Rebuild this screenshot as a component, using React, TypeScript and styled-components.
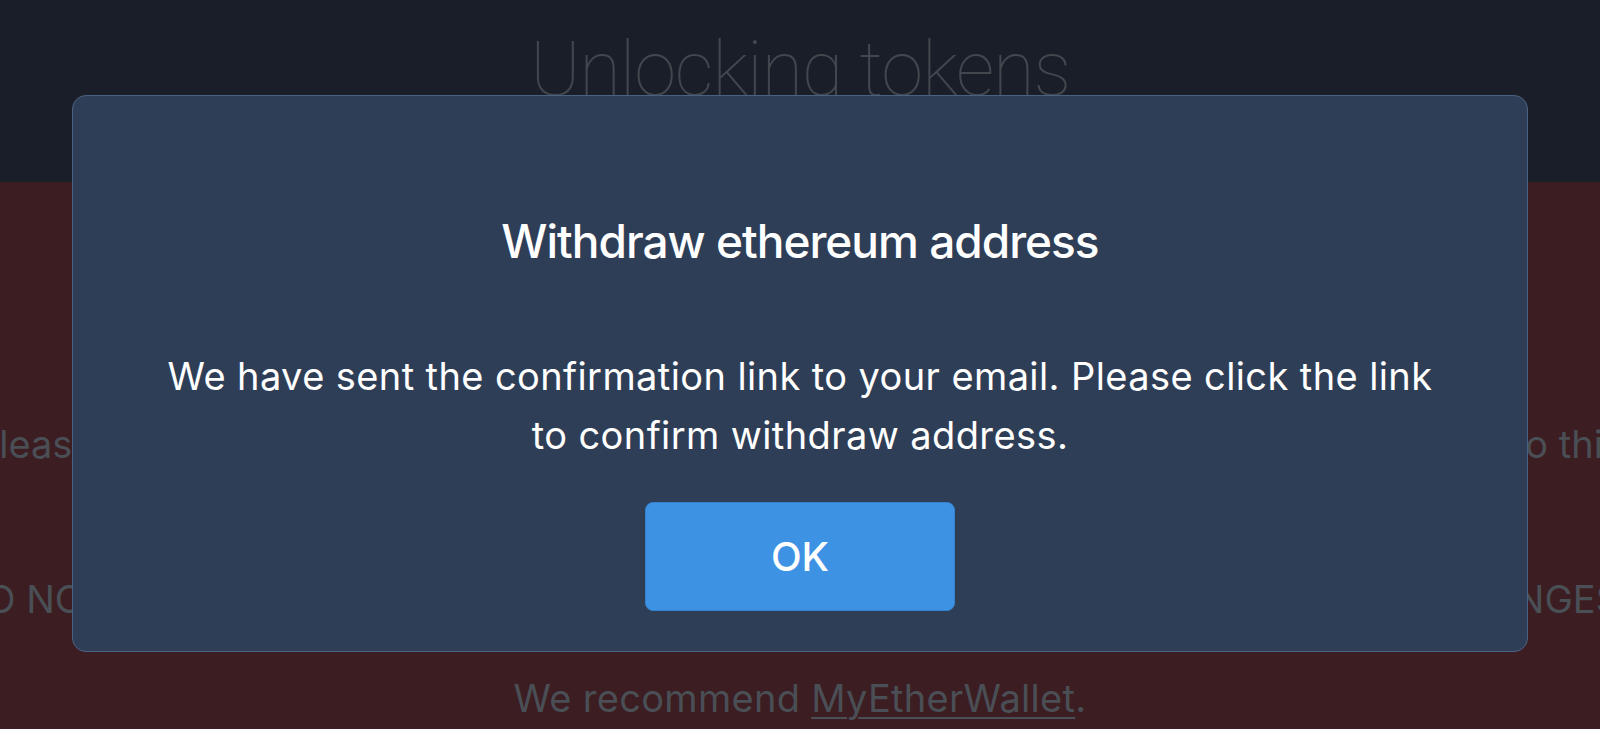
import styled, { createGlobalStyle } from "styled-components";

const GlobalStyle = createGlobalStyle`
  html, body {
    margin: 0;
    padding: 0;
    height: 100%;
    overflow: hidden;
    background: #3c1d22;
  }

  body {
    font-family: Inter, "Noto Sans", "Liberation Sans", sans-serif;
  }
`;

const Page = styled.div`
  width: 100%;
  height: 729px;
  overflow: hidden;
  position: relative;
`;

const Header = styled.header`
  height: 182px;
  background: #191e28;
  display: flex;
  justify-content: center;
  padding-top: 24px;
  box-sizing: border-box;
`;

const PageTitle = styled.h1`
  margin: 0;
  font-family: Roboto, "Liberation Sans", sans-serif;
  font-weight: 100;
  font-size: 76px;
  line-height: normal;
  letter-spacing: -1.2px;
  color: #42464d;
`;

const Content = styled.section`
  display: flex;
  flex-direction: column;
  align-items: center;
  padding-top: 234px;
  color: #4a4e55;
  font-size: 38px;
  line-height: 57px;
`;

// a line wider than the window; its middle sits behind the dialog
const WideLine = styled.p<{ $width: number; $shift: number; $gap: number }>`
  margin: 0 0 ${({ $gap }) => $gap}px ${({ $shift }) => $shift}px;
  flex: none;
  width: ${({ $width }) => $width}px;
  display: flex;
  justify-content: space-between;
  white-space: nowrap;
`;

const Recommend = styled.p`
  margin: 0;
  white-space: nowrap;
  letter-spacing: 0.3px;

  a {
    color: inherit;
    text-decoration: underline;
    text-underline-offset: 5px;
    text-decoration-thickness: 2px;
  }
`;

const Overlay = styled.div`
  position: absolute;
  inset: 0;
  display: flex;
  justify-content: center;
  align-items: flex-start;
  padding-top: 95px;
  box-sizing: border-box;
`;

const Modal = styled.div`
  width: 1456px;
  height: 557px;
  box-sizing: border-box;
  background: #2f3e57;
  border: 1px solid #4a6282;
  border-radius: 14px;
  display: flex;
  flex-direction: column;
  align-items: center;
  padding: 115px 90px 0;
  color: #ffffff;
`;

const ModalTitle = styled.h2`
  margin: 0;
  font-size: 46px;
  font-weight: 500;
  line-height: 60px;
  letter-spacing: -1px;
`;

const ModalText = styled.p`
  margin: 76px 0 0;
  font-size: 38px;
  line-height: 59px;
  letter-spacing: 0.4px;
  text-align: center;
`;

const OkButton = styled.button`
  margin-top: 37px;
  width: 310px;
  height: 109px;
  border: 1px solid #3482d0;
  border-radius: 8px;
  background: #3d92e4;
  color: #ffffff;
  font-family: inherit;
  font-size: 40px;
  font-weight: 500;
  cursor: pointer;
`;

export default function App() {
  return (
    <>
      <GlobalStyle />
      <Page>
        <Header>
          <PageTitle>Unlocking tokens</PageTitle>
        </Header>
        <Content>
          <WideLine $width={1648} $shift={-2} $gap={98}>
            <span>Please make sure that you send the tokens</span>
            <span>from your own wallet, back to this</span>
          </WideLine>
          <WideLine $width={1672} $shift={-10} $gap={42}>
            <span>DO NOT SEND TOKENS DIRECTLY</span>
            <span>FROM ANY OF THE EXCHANGES.</span>
          </WideLine>
          <Recommend>
            We recommend <a href="#">MyEtherWallet</a>.
          </Recommend>
        </Content>
        <Overlay>
          <Modal>
            <ModalTitle>Withdraw ethereum address</ModalTitle>
            <ModalText>
              We have sent the confirmation link to your email. Please click the link to confirm withdraw address.
            </ModalText>
            <OkButton>OK</OkButton>
          </Modal>
        </Overlay>
      </Page>
    </>
  );
}
